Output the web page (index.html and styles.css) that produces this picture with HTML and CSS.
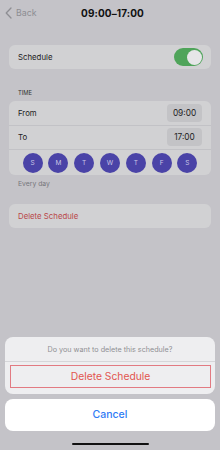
FILE: index.html
```html
<!DOCTYPE html>
<html>
<head>
<meta charset="utf-8">
<link rel="stylesheet" href="styles.css">
</head>
<body>
<div class="screen">
  <header class="nav">
    <div class="back">
      <svg class="chev" width="7" height="12" viewBox="0 0 7 12"><path d="M6 1 L1.2 6 L6 11" fill="none" stroke="#8e8e93" stroke-width="1.3" stroke-linecap="round" stroke-linejoin="round"/></svg>
      <span>Back</span>
    </div>
    <div class="title">09:00–17:00</div>
    <div></div>
  </header>

  <div class="card row schedule">
    <span>Schedule</span>
    <div class="toggle"><div class="knob"></div></div>
  </div>

  <div class="section-label">TIME</div>
  <div class="card time">
    <div class="row trow"><span>From</span><span class="pill">09:00</span></div>
    <div class="row trow"><span>To</span><span class="pill">17:00</span></div>
    <div class="days">
      <span class="day">S</span><span class="day">M</span><span class="day">T</span><span class="day">W</span><span class="day">T</span><span class="day">F</span><span class="day">S</span>
    </div>
  </div>
  <div class="footnote">Every day</div>

  <div class="card row del">Delete Schedule</div>

  <div class="sheet">
    <div class="group">
      <div class="question">Do you want to delete this schedule?</div>
      <div class="action"><div class="focus">Delete Schedule</div></div>
    </div>
    <div class="cancel">Cancel</div>
  </div>
  <div class="home"></div>
</div>
</body>
</html>
```

FILE: styles.css
```css
* { box-sizing: border-box; }
html, body { margin: 0; padding: 0; }
body {
  width: 220px;
  height: 450px;
  background: #c4c3c8;
  font-family: Inter, "Noto Sans", sans-serif;
  overflow: hidden;
}
.screen {
  position: relative;
  width: 220px;
  height: 450px;
  display: flex;
  flex-direction: column;
}
.nav {
  height: 25px;
  display: grid;
  grid-template-columns: 1fr auto 1fr;
  align-items: center;
  padding: 0 0 0 5px;
}
.back {
  display: flex;
  align-items: center;
  gap: 4px;
  color: #8e8e93;
  font-size: 8.8px;
}
.title {
  font-size: 10px;
  font-weight: 700;
  color: #111;
  letter-spacing: 0.1px;
}
.card {
  margin: 0 9px;
  background: #d1d1d3;
  border-radius: 6px;
}
.row {
  display: flex;
  align-items: center;
  justify-content: space-between;
  padding: 0 9px;
  font-size: 7.8px;
  color: #222;
}
.schedule {
  margin-top: 20px;
  height: 24px;
  padding-right: 8px;
}
.toggle {
  width: 29px;
  height: 18px;
  border-radius: 9px;
  background: #4fa45a;
  display: flex;
  justify-content: flex-end;
  align-items: center;
  padding: 1.5px;
}
.knob {
  width: 15px;
  height: 15px;
  border-radius: 50%;
  background: #e6e6e8;
}
.section-label {
  margin: 20px 0 4px 18px;
  height: 8px;
  line-height: 8px;
  font-size: 5.8px;
  color: #333;
}
.time { display: flex; flex-direction: column; }
.trow {
  height: 24.6px;
  border-bottom: 0.6px solid #c2c2c6;
  padding-right: 9px;
}
.pill {
  width: 35px;
  height: 18px;
  border-radius: 4px;
  background: #c3c3c6;
  display: flex;
  align-items: center;
  justify-content: center;
  font-size: 8.3px;
  color: #222;
}
.days {
  height: 24.6px;
  display: flex;
  align-items: center;
  justify-content: space-between;
  padding: 2px 13.6px 0;
}
.day {
  width: 20px;
  height: 20px;
  border-radius: 50%;
  background: #4a43a7;
  color: #c9c7e6;
  font-size: 6.5px;
  display: flex;
  align-items: center;
  justify-content: center;
}
.footnote {
  margin: 4px 0 0 18px;
  height: 9px;
  line-height: 9px;
  font-size: 6.8px;
  color: #76767b;
}
.del {
  margin-top: 16px;
  height: 24.4px;
  color: #b9474a;
  justify-content: flex-start;
}
.sheet {
  position: absolute;
  left: 5px;
  right: 5px;
  top: 337px;
  display: flex;
  flex-direction: column;
  gap: 5.5px;
}
.group {
  background: #eeeef0;
  border-radius: 8px;
  overflow: hidden;
}
.question {
  height: 25px;
  display: flex;
  align-items: center;
  justify-content: center;
  font-size: 7.2px;
  color: #8e8e93;
  border-bottom: 0.6px solid #d6d6d9;
}
.action {
  height: 31.5px;
  padding: 2.5px 4px 6px 5px;
}
.focus {
  height: 100%;
  border: 1px solid #e27a82;
  display: flex;
  align-items: center;
  justify-content: center;
  color: #e2554f;
  font-size: 10.3px;
}
.cancel {
  height: 31.5px;
  background: #ffffff;
  border-radius: 8px;
  display: flex;
  align-items: center;
  justify-content: center;
  color: #2f7bf5;
  font-size: 10.5px;
  font-weight: 500;
}
.home {
  position: absolute;
  left: 72px;
  top: 442.5px;
  width: 77px;
  height: 2.5px;
  border-radius: 2px;
  background: #111;
}
```
